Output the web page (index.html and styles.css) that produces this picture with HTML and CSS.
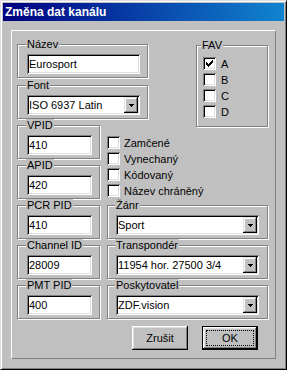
FILE: index.html
```html
<!DOCTYPE html>
<html lang="cs">
<head>
  <meta charset="UTF-8">
  <meta name="viewport" content="width=device-width, initial-scale=1">
  <title>Změna dat kanálu</title>
  <link rel="stylesheet" href="styles.css">
</head>
<body>

  <div class="window">
    <div class="titlebar">Změna dat kanálu</div>

    <div class="panel">
      <div class="top-row">
        <div class="col-name">
          <fieldset class="group group-name">
            <legend>Název</legend>
            <input class="field field-name" type="text" value="Eurosport">
          </fieldset>
          <fieldset class="group">
            <legend>Font</legend>
            <div class="combo combo-font">
              <span class="combo-value">ISO 6937 Latin</span>
              <span class="combo-btn"><svg width="5" height="3" viewBox="0 0 5 3"><path d="M0 0h5v1h-5zM1 1h3v1h-3zM2 2h1v1h-1z"/></svg></span>
            </div>
          </fieldset>
        </div>

        <fieldset class="group group-fav">
          <legend>FAV</legend>
          <label class="check"><span class="box"><svg width="7" height="7" viewBox="0 0 7 7"><path d="M6 0h1v1h-1zM5 1h2v1h-2zM0 2h1v1h-1zM4 2h3v1h-3zM0 3h2v1h-2zM3 3h3v1h-3zM0 4h5v1h-5zM1 5h3v1h-3zM2 6h1v1h-1z"/></svg></span>A</label>
          <label class="check"><span class="box"></span>B</label>
          <label class="check"><span class="box"></span>C</label>
          <label class="check"><span class="box"></span>D</label>
        </fieldset>
      </div>

      <div class="bottom-row">
        <div class="col-ids">
          <fieldset class="group">
            <legend>VPID</legend>
            <input class="field" type="text" value="410">
          </fieldset>
          <fieldset class="group">
            <legend>APID</legend>
            <input class="field" type="text" value="420">
          </fieldset>
          <fieldset class="group">
            <legend>PCR PID</legend>
            <input class="field" type="text" value="410">
          </fieldset>
          <fieldset class="group">
            <legend>Channel ID</legend>
            <input class="field" type="text" value="28009">
          </fieldset>
          <fieldset class="group">
            <legend>PMT PID</legend>
            <input class="field" type="text" value="400">
          </fieldset>
        </div>

        <div class="col-right">
          <div class="flags">
            <label class="check"><span class="box"></span>Zamčené</label>
            <label class="check"><span class="box"></span>Vynechaný</label>
            <label class="check"><span class="box"></span>Kódovaný</label>
            <label class="check"><span class="box"></span>Název chráněný</label>
          </div>

          <fieldset class="group">
            <legend>Žánr</legend>
            <div class="combo combo-wide">
              <span class="combo-value">Sport</span>
              <span class="combo-btn"><svg width="5" height="3" viewBox="0 0 5 3"><path d="M0 0h5v1h-5zM1 1h3v1h-3zM2 2h1v1h-1z"/></svg></span>
            </div>
          </fieldset>
          <fieldset class="group">
            <legend>Transpondér</legend>
            <div class="combo combo-wide">
              <span class="combo-value">11954 hor. 27500 3/4</span>
              <span class="combo-btn"><svg width="5" height="3" viewBox="0 0 5 3"><path d="M0 0h5v1h-5zM1 1h3v1h-3zM2 2h1v1h-1z"/></svg></span>
            </div>
          </fieldset>
          <fieldset class="group">
            <legend>Poskytovatel</legend>
            <div class="combo combo-wide">
              <span class="combo-value">ZDF.vision</span>
              <span class="combo-btn"><svg width="5" height="3" viewBox="0 0 5 3"><path d="M0 0h5v1h-5zM1 1h3v1h-3zM2 2h1v1h-1z"/></svg></span>
            </div>
          </fieldset>

          <div class="buttons">
            <button class="btn"><span>Zrušit</span></button>
            <button class="btn btn-default"><span>OK</span></button>
          </div>
        </div>
      </div>
    </div>
  </div>

</body>
</html>
```

FILE: styles.css
```css
body {
  margin: 0;
  background: #c0c0c0;
  font-family: "Liberation Sans", Arial, sans-serif;
  font-size: 11px;
  color: #000;
}
.window {
  width: 287px;
  height: 370px;
  box-sizing: border-box;
  padding: 2px;
  background: #c0c0c0;
  border: 1px solid;
  border-color: #dfdfdf #000 #000 #dfdfdf;
  box-shadow: inset 1px 1px #fff, inset -1px -1px #808080;
}
.titlebar {
  height: 18px;
  padding-left: 2px;
  background: linear-gradient(90deg, #000080, #1084d0);
  color: #fff;
  font-weight: bold;
  font-size: 12px;
  line-height: 18px;
}
.panel {
  width: 265px;
  height: 329px;
  box-sizing: border-box;
  margin: 9px 0 0 8px;
  padding: 7px 7px 0 5px;
  border: 1px solid;
  border-color: #fff #808080 #808080 #fff;
}
.top-row {
  display: flex;
  justify-content: space-between;
  align-items: flex-start;
}
.col-name {
  width: 131px;
}
.group {
  margin: 0;
  min-width: 0;
  box-sizing: border-box;
  padding: 3px 7px 3px 9px;
  border: 1px solid #808080;
  box-shadow: inset 1px 1px #fff, 1px 1px #fff;
}
.group legend {
  padding: 0 1px;
  margin-left: -1px;
  line-height: 13px;
  background: #c0c0c0;
}
.group-name {
  margin-bottom: 1px;
}
.group-fav {
  width: 72px;
  margin-top: 1px;
  margin-bottom: -8px;
  padding: 4px 6px 6px 6px;
}
.group-fav legend {
  margin-left: -2px;
}
.group-fav .check {
  gap: 5px;
}
.field {
  display: block;
  box-sizing: border-box;
  width: 65px;
  height: 20px;
  margin: 0;
  padding: 0 2px;
  border: 0;
  outline: none;
  font: inherit;
  color: #000;
  background: #fff;
  box-shadow: inset 1px 1px #808080, inset -1px -1px #fff, inset 2px 2px #000, inset -2px -2px #dfdfdf;
}
.field-name {
  width: 113px;
}
.combo {
  display: flex;
  box-sizing: border-box;
  width: 113px;
  height: 20px;
  padding: 2px;
  background: #fff;
  box-shadow: inset 1px 1px #808080, inset -1px -1px #fff, inset 2px 2px #000, inset -2px -2px #dfdfdf;
}
.combo-wide {
  width: 143px;
}
.combo-value {
  flex: 1;
  line-height: 16px;
  white-space: nowrap;
  overflow: hidden;
}
.combo-btn {
  width: 14px;
  height: 16px;
  display: flex;
  align-items: center;
  justify-content: center;
  background: #c0c0c0;
  box-shadow: inset -1px -1px #000, inset 1px 1px #dfdfdf, inset -2px -2px #808080, inset 2px 2px #fff;
}
.check {
  display: flex;
  align-items: flex-start;
  gap: 4px;
  height: 16px;
  line-height: 16px;
  white-space: nowrap;
}
.box {
  width: 13px;
  height: 13px;
  margin-top: 1px;
  flex: none;
  box-sizing: border-box;
  display: flex;
  align-items: center;
  justify-content: center;
  background: #fff;
  box-shadow: inset 1px 1px #808080, inset -1px -1px #fff, inset 2px 2px #000, inset -2px -2px #dfdfdf;
}
.bottom-row {
  display: flex;
  gap: 7px;
  align-items: flex-start;
}
.col-ids {
  width: 83px;
}
.col-right {
  width: 161px;
}
.flags {
  padding-top: 16px;
}
.col-right .group {
  padding-left: 8px;
}
.buttons {
  display: flex;
  justify-content: flex-end;
  gap: 14px;
  margin-top: 7px;
  padding-right: 10px;
}
.btn {
  display: flex;
  box-sizing: border-box;
  width: 56px;
  height: 24px;
  padding: 4px;
  border: 0;
  font: inherit;
  color: #000;
  background: #c0c0c0;
  box-shadow: inset -1px -1px #000, inset 1px 1px #fff, inset -2px -2px #808080, inset 2px 2px #dfdfdf;
}
.btn span {
  flex: 1;
  display: flex;
  align-items: center;
  justify-content: center;
  border: 1px dotted transparent;
}
.btn-default {
  padding: 3px;
  border: 1px solid #000;
}
.btn-default span {
  border-color: #000;
}
```
